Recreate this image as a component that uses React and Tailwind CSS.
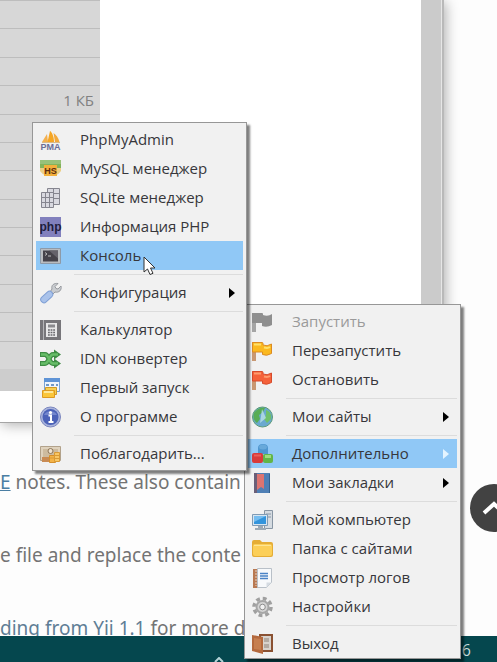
import React from "react";

const Svg = ({ children }) => (
  <svg viewBox="0 0 22 22" className="size-[22px] shrink-0" aria-hidden="true">
    {children}
  </svg>
);

const icons = {
  pma: (
    <Svg>
      <path d="M2 13 7 5l1 8z" fill="#f3b04e" />
      <path d="M7.500 13 10 2c2 1 4 6 4 11z" fill="#f5a623" />
      <path d="M13.500 4c3 2 5 5 6 9h-4.500z" fill="#f2a93c" />
      <path d="M2 13.500h18" stroke="#d8b98a" />
      <text x="10.500" y="21" textAnchor="middle" fontSize="9" fontWeight="700" fill="#6b6d97" fontFamily="Liberation Sans, sans-serif">PMA</text>
    </Svg>
  ),
  heidi: (
    <Svg>
      <path d="M0 2h21v10q-2 3-5 3H5q-3 0-5-3z" fill="#83b35b" />
      <path d="M0 2h21v4H0z" fill="#98c27a" />
      <path d="M0 10h21v3q-2 3-5 4H5q-3-1-5-4z" fill="#eccf86" />
      <path d="M4 7h13v11H4z" fill="#f3b03c" />
      <text x="10.500" y="16" textAnchor="middle" fontSize="9" fontWeight="700" fill="#5b2c10" fontFamily="Liberation Sans, sans-serif">HS</text>
    </Svg>
  ),
  sqlite: (
    <Svg>
      <g fill="#d9d9e0" stroke="#85858f">
        <path d="M7.500 1.500h12v16h-12z" />
        <path d="M7.500 6.500h12M7.500 11.500h12M13.500 1.500v16" />
        <path d="M1.500 5.500h12v15h-12z" />
        <path d="M1.500 10.500h12M1.500 15.500h12M5.500 5.500v15M9.500 5.500v15" />
      </g>
    </Svg>
  ),
  php: (
    <Svg>
      <path d="M0 1h21v20H0z" fill="#8280bd" />
      <text x="10.500" y="15" textAnchor="middle" fontSize="12" fontWeight="700" fill="#1f1d3d" fontFamily="Liberation Sans, sans-serif">php</text>
    </Svg>
  ),
  console: (
    <Svg>
      <path d="M.5 3.500h20v15H.5z" fill="#b9bcc0" stroke="#8d9aa8" />
      <path d="M3 5.500h15v11H3z" fill="#45424a" />
      <path d="M9 5.500h9v8z" fill="#65626b" />
      <path d="m5 7.500 2 1.500-2 1.500M8 11h3" stroke="#bdbdbd" fill="none" />
    </Svg>
  ),
  wrench: (
    <Svg>
      <path d="M10 10l2-3c-1-4 2-6 6-5.500l-3 3 1 2 2 .5 3-3c1 4-2 7-6 6l-3 3z" fill="#c9ccd0" stroke="#979a9f" />
      <path d="M4 17.500 9.500 12.500" stroke="#7f9fd4" strokeWidth="7.500" strokeLinecap="round" />
      <path d="M4 17.500 9.500 12.500" stroke="#a9c2ea" strokeWidth="5.500" strokeLinecap="round" />
    </Svg>
  ),
  calc: (
    <Svg>
      <path d="M0 1h21v20H0z" fill="#77767a" />
      <path d="M3.500 1v20" stroke="#b5b5b8" />
      <path d="M6 4h11v14H6z" fill="#e7e7e8" />
      <path d="M8 5.500h7v3H8z" fill="#8a8a8e" />
      <path d="M8 11h7M8 13.500h7M8 16h7" stroke="#69696d" strokeWidth="1.500" strokeDasharray="1.800 .8" />
    </Svg>
  ),
  shuffle: (
    <Svg>
      <g fill="none" stroke="#3f8c45" strokeWidth="5">
        <path d="M0 6.500h5q2 0 4 4.500t4 4.500h3M0 15.500h5q2 0 4-4.500t4-4.500h3" />
      </g>
      <path d="M14 1.500l7 5-7 5zM14 10.500l7 5-7 5z" fill="#3f8c45" />
      <path
        d="M1 6.500h4q2 0 4 4.500t4 4.500h5M1 15.500h4q2 0 4-4.500t4-4.500h5"
        fill="none"
        stroke="#67bd68"
        strokeWidth="2.500"
      />
    </Svg>
  ),
  wizard: (
    <Svg>
      <path d="M4.500 1.500h15v13h-15z" fill="#eef5fc" stroke="#7ba4d4" />
      <path d="M4 1h16v4H4z" fill="#5f94d6" />
      <path d="M6 8h3M11 8h3M16 8h2" stroke="#7099c8" strokeWidth="2" />
      <path d="M5.500 10.500h11v7h-11z" fill="#f7cf52" stroke="#cf9a26" />
      <path d="M2.500 13.500h12v7h-12z" fill="#fbc63a" stroke="#dd9a22" />
      <path d="M4 15h9" stroke="#fde89b" strokeWidth="2" />
    </Svg>
  ),
  info: (
    <Svg>
      <circle cx="10.500" cy="11" r="10" fill="#a9b4dc" stroke="#7b86be" />
      <circle cx="10.500" cy="11" r="8" fill="#4c62b8" />
      <path d="M4 9a7 6 0 0 1 13 0z" fill="#7487cd" />
      <circle cx="10.500" cy="6.500" r="1.600" fill="#fff" />
      <path d="M8.500 9.500h2.500v6M8.500 16h5" stroke="#fff" strokeWidth="2" fill="none" />
    </Svg>
  ),
  donate: (
    <Svg>
      <path d="M.5 3.500h20v14H.5z" fill="#dfd2bd" stroke="#b2a28b" />
      <path d="M3 6h15v8H3z" fill="#cdbb9f" />
      <circle cx="10.500" cy="8" r="2.500" fill="#eee2cf" stroke="#8d7659" />
      <path d="M2 14h7v5H2z" fill="#c98b54" />
      <path d="M9.500 12.500h6v7h-6z" fill="#f4b347" stroke="#d48f2b" />
      <path d="M14.500 9.500h5v9h-5z" fill="#f8c765" stroke="#d99a34" />
      <path d="M10 15h5M15 12.500h4M15 15.500h4" stroke="#d99a34" />
    </Svg>
  ),
  flagGray: (
    <Svg>
      <path d="M0 2h4v19H0z" fill="#a5a5a5" />
      <path d="M0 2h10q1 0 1 1v1q5 2 9-1v11q-5 3-10 1v-3H0z" fill="#8f8f8f" />
    </Svg>
  ),
  flagYellow: (
    <Svg>
      <path d="M0 2h4v19H0z" fill="#c99872" />
      <path d="M.5 2.500H10q1 0 1 1V5q4 2 8.500-1v9.500q-5 3-9 1V12H.5z" fill="#fbb91f" stroke="#dc8b21" />
      <path d="M2 4.500h7M12 7.500q4 1 6-.5" stroke="#ffe06b" fill="none" strokeWidth="2" />
    </Svg>
  ),
  flagRed: (
    <Svg>
      <path d="M0 2h4v19H0z" fill="#c99872" />
      <path d="M.5 2.500H10q1 0 1 1V5q4 2 8.500-1v9.500q-5 3-9 1V12H.5z" fill="#f5623a" stroke="#d64a2b" />
      <path d="M2 4.500h7M12 7.500q4 1 6-.5" stroke="#ff9c6e" fill="none" strokeWidth="2" />
    </Svg>
  ),
  globe: (
    <Svg>
      <circle cx="10.500" cy="11" r="10" fill="#6aa9cf" stroke="#5b9a78" />
      <path d="M2 7c3-5 8-6 11-5l-2 4-4 3 1 4-3 4C1 14 1 10 2 7z" fill="#58ad55" />
      <path d="M14 4c4 1 6 5 5 9l-4 4-3-4 2-4z" fill="#6fc06a" />
      <path d="M10 3l4 9-6 5z" fill="#b9e0e6" opacity=".8" />
    </Svg>
  ),
  blocks: (
    <Svg>
      <path d="M6 5q0-4 5-4t5 4v6H6z" fill="#4f96cf" />
      <ellipse cx="11" cy="4" rx="4" ry="2.500" fill="#68a9da" />
      <rect x="0" y="10" width="11" height="10" rx="2" fill="#d83b3b" />
      <path d="M2 12.500h7" stroke="#ea5f58" strokeWidth="2" />
      <rect x="11" y="11" width="10" height="9" rx="2" fill="#62b548" />
      <path d="M13 13.500h6" stroke="#9fdb7f" strokeWidth="3" />
    </Svg>
  ),
  book: (
    <Svg>
      <path d="M2 1h16v20H2z" fill="#4f7fb5" />
      <path d="M2 1h3v20H2z" fill="#6b5f78" />
      <path d="M5 2h7v15l-3-2-4 3z" fill="#dd7470" />
      <path d="M17.500 2v19" stroke="#34618f" />
    </Svg>
  ),
  computer: (
    <Svg>
      <path d="M12.500 1.500h8v18h-8z" fill="#d5dbe1" stroke="#8896a4" />
      <path d="M14 5h5M14 8h5" stroke="#8896a4" />
      <path d="M.5 5.500h15v11H.5z" fill="#d7e5f0" stroke="#7f9bb5" />
      <path d="M2 7h12v8H2z" fill="#3294dc" />
      <path d="M2 7h12l-12 6z" fill="#75bdf0" />
      <path d="M6 17h5v2h3v2H3v-2h3z" fill="#9caab6" />
    </Svg>
  ),
  folder: (
    <Svg>
      <path d="M0 4q0-2 2-2h6l2 2h9q2 0 2 2v11q0 2-2 2H2q-2 0-2-2z" fill="#e5ad35" />
      <path d="M1 8q0-2 2-2h15q2 0 2 2v8q0 2-2 2H3q-2 0-2-2z" fill="#fccf58" />
      <path d="M2 7.500h17" stroke="#fee594" />
    </Svg>
  ),
  log: (
    <Svg>
      <path d="M1 2h5v19H1z" fill="#b87952" />
      <path d="M5.500 1.500h14v14l-5 5h-9z" fill="#f7f9fb" stroke="#b9c0c8" />
      <path d="M4 3v16" stroke="#e3d5c8" strokeDasharray="2 1" />
      <path d="M8 6.500h8M8 9h8M8 11.500h8" stroke="#4a83c6" strokeWidth="1.600" />
      <path d="M14.500 20.500v-5h5z" fill="#d5dbe2" />
    </Svg>
  ),
  gear: (
    <Svg>
      <circle cx="10.500" cy="11" r="8.500" fill="none" stroke="#a0a0a0" strokeWidth="3.500" strokeDasharray="3.800 2.875" />
      <circle cx="10.500" cy="11" r="6" fill="#d4d4d4" stroke="#a6a6a6" strokeWidth="2" />
      <circle cx="10.500" cy="11" r="2.800" fill="#f1f1f1" stroke="#8c8c8c" />
    </Svg>
  ),
  door: (
    <Svg>
      <path d="M7 1h14v18H7z" fill="#8a5132" />
      <path d="M9 3h10v14H9z" fill="#d8d3cd" />
      <path d="M12 5h5v4h-5zM12 11h5v4h-5z" fill="#b3aaa2" />
      <path d="M0 2l11 2v17L0 18z" fill="#b4693d" />
      <path d="M2 5l7 1v11l-7-1z" fill="#c67f50" />
    </Svg>
  ),
};

const toolsMenu = [
  { icon: "pma", label: "PhpMyAdmin" },
  { icon: "heidi", label: "MySQL менеджер" },
  { icon: "sqlite", label: "SQLite менеджер" },
  { icon: "php", label: "Информация PHP" },
  { icon: "console", label: "Консоль", active: true },
  null,
  { icon: "wrench", label: "Конфигурация", sub: true },
  null,
  { icon: "calc", label: "Калькулятор" },
  { icon: "shuffle", label: "IDN конвертер" },
  { icon: "wizard", label: "Первый запуск" },
  { icon: "info", label: "О программе" },
  null,
  { icon: "donate", label: "Поблагодарить..." },
];

const mainMenu = [
  { icon: "flagGray", label: "Запустить", disabled: true },
  { icon: "flagYellow", label: "Перезапустить" },
  { icon: "flagRed", label: "Остановить" },
  null,
  { icon: "globe", label: "Мои сайты", sub: true },
  null,
  { icon: "blocks", label: "Дополнительно", sub: true, active: true },
  { icon: "book", label: "Мои закладки", sub: true },
  null,
  { icon: "computer", label: "Мой компьютер" },
  { icon: "folder", label: "Папка с сайтами" },
  { icon: "log", label: "Просмотр логов" },
  { icon: "gear", label: "Настройки" },
  null,
  { icon: "door", label: "Выход" },
];

function Menu({ items, label, className }) {
  return (
    <div
      role="menu"
      aria-label={label}
      className={`absolute border border-[#979797] bg-[#f1f1f1] px-[3px] pt-[2px] shadow-[3px_3px_2px_rgba(0,0,0,0.5)] ${className}`}
    >
      {items.map((item, i) =>
        item ? (
          <button
            key={i}
            type="button"
            role="menuitem"
            disabled={item.disabled}
            className={`flex h-[29px] w-full items-center gap-[18px] pl-1 pr-2 text-left text-[15px] font-medium ${
              item.active ? "bg-[#90c8f6]" : ""
            } ${item.disabled ? "text-[#9a9a9a]" : "text-[#37373b]"}`}
          >
            {icons[item.icon]}
            <span className="flex-1 whitespace-nowrap">{item.label}</span>
            {item.sub && (
              <svg
                viewBox="0 0 6 10"
                className={`h-[10px] w-[6px] ${item.active ? "text-[#e4f4ff]" : "text-black"}`}
                aria-hidden="true"
              >
                <path d="M0 0l6 5-6 5z" fill="currentColor" />
              </svg>
            )}
          </button>
        ) : (
          <div key={i} role="separator" className="flex h-2 items-center pl-[38px]">
            <div className="h-px w-full bg-[#dcdcdc]" />
          </div>
        )
      )}
    </div>
  );
}

function FileWindow() {
  return (
    <section className="flex h-[423px] shrink-0 pr-[53px]">
      <div className="flex flex-1 border-b border-[#a5a5a5] bg-white shadow-[2px_2px_12px_rgba(0,0,0,0.3)]">
        <div className="h-[391px] w-[100px] bg-[#cdcdcd]">
          <div className="grid h-[369px] grid-rows-13 bg-[#d7d7d7] text-right text-[15px] text-[#818181]">
            {Array.from({ length: 13 }, (_, i) => (
              <div key={i} className="flex items-center justify-end border-t border-[#bdbdbd] pr-[6px]">
                {i === 3 && "1 КБ"}
              </div>
            ))}
          </div>
        </div>
        <div className="flex-1" />
        <div className="flex w-[23px] justify-end border-r-2 border-[#b9b9b9] bg-[#cbcbcb]">
          <div className="w-px bg-[#e6e6e6]" />
        </div>
      </div>
    </section>
  );
}

export default function App() {
  return (
    <div className="relative flex h-screen flex-col overflow-hidden bg-[#fdfdfd] font-['Open_Sans','Noto_Sans',sans-serif]">
      <main className="min-h-0 flex-1 overflow-hidden">
        <FileWindow />
        <article className="flex flex-col gap-[43px] whitespace-nowrap pt-[44px] font-['Noto_Sans',sans-serif] text-[19px] leading-[30px] text-[#747474]">
          <p>
            <a href="#upgrade" className="text-[#4a7ea3] underline">E</a> notes. These also contain
          </p>
          <p>e file and replace the conte</p>
          <p>
            <a href="#yii" className="text-[#607d95]">ding from Yii 1.1</a> for more d
          </p>
        </article>
      </main>
      <footer className="flex h-[26px] shrink-0 items-end justify-between bg-[#05474e] pl-[214px] pr-[26px] text-[16px] text-[#c9dcdd]">
        <svg viewBox="0 0 10 5" className="h-[5px] w-[10px]" aria-hidden="true">
          <path d="M1 5l4-4 4 4" fill="none" stroke="#b5d3d6" strokeWidth="2" />
        </svg>
        <span>6</span>
      </footer>
      <button
        type="button"
        aria-label="Наверх"
        className="absolute -right-[21px] top-[484px] flex size-12 items-center justify-center rounded-full bg-[#424242]"
      >
        <svg viewBox="0 0 24 24" className="size-6" aria-hidden="true">
          <path d="M2 17l10-9 10 9" fill="none" stroke="#fff" strokeWidth="4" />
        </svg>
      </button>
      <Menu items={mainMenu} label="Главное меню" className="left-[244px] top-[304px] w-[217px]" />
      <Menu items={toolsMenu} label="Дополнительно" className="left-[32px] top-[122px] w-[215px] pb-[2px]" />
      <svg viewBox="0 0 14 20" className="absolute left-[143px] top-[256px] h-5 w-[14px]" aria-hidden="true">
        <path d="M1 1v15l3.500-3 2.500 5.500 3-1.200L7.500 12H12z" fill="#fff" stroke="#333" />
      </svg>
    </div>
  );
}
